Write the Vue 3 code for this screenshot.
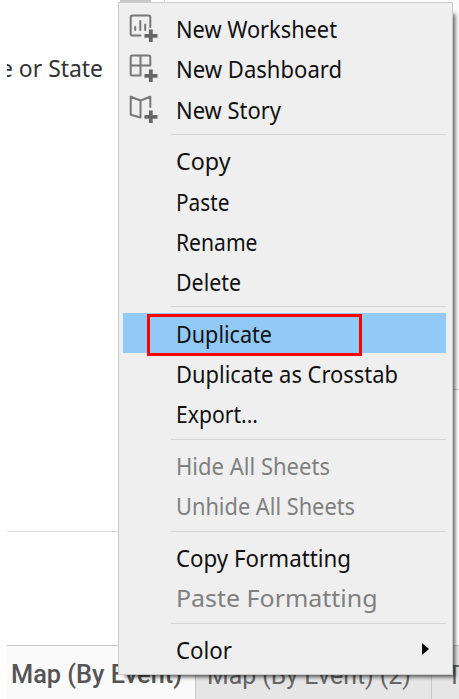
<script setup>
const groups = [
  [
    { label: 'New Worksheet', w: 161, icon: 'sheet' },
    { label: 'New Dashboard', w: 166, icon: 'dash' },
    { label: 'New Story', w: 105, icon: 'story' },
  ],
  [
    { label: 'Copy', w: 54.5 },
    { label: 'Paste', w: 53.5 },
    { label: 'Rename', w: 81.5 },
    { label: 'Delete', w: 65 },
  ],
  [
    { label: 'Duplicate', w: 96, active: true },
    { label: 'Duplicate as Crosstab', w: 222 },
    { label: 'Export...', w: 82 },
  ],
  [
    { label: 'Hide All Sheets', w: 154, disabled: true },
    { label: 'Unhide All Sheets', w: 179, disabled: true },
  ],
  [
    { label: 'Copy Formatting', w: 175 },
    { label: 'Paste Formatting', w: 201.5, disabled: true },
  ],
  [{ label: 'Color', w: 56, submenu: true }],
]
</script>

<template>
  <div class="screen">
    <main class="canvas">
      <div class="top">
        <svg class="field" width="110" height="34">
          <text x="-7" y="26" textLength="103" lengthAdjust="spacingAndGlyphs">e or State</text>
        </svg>
      </div>
      <div class="shelf"></div>
    </main>
    <aside class="side"><div class="upper"></div></aside>
    <footer class="tabs">
      <div class="tab current">
        <svg width="188" height="53"><text x="4" y="37" textLength="171" lengthAdjust="spacingAndGlyphs">Map (By Event)</text></svg>
      </div>
      <div class="tab second">
        <svg width="234" height="53"><text x="11" y="38" textLength="204" lengthAdjust="spacingAndGlyphs">Map (By Event) (2)</text></svg>
      </div>
      <div class="tab third">
        <svg width="28" height="53"><text x="15" y="38">Tr</text></svg>
      </div>
    </footer>

    <div class="anchor"></div>
    <div class="shade"></div>
    <nav class="menu">
      <div v-for="(group, g) in groups" :key="g" class="group">
        <div v-for="item in group" :key="item.label" class="item" :class="{ active: item.active, disabled: item.disabled }">
          <span class="icon">
            <svg v-if="item.icon" width="30" height="34" viewBox="0 0 30 34">
              <g class="line">
                <template v-if="item.icon === 'sheet'">
                  <path d="M11.5 27.5H3.5Q1.7 27.5 1.7 25.7V9.3Q1.7 7.5 3.5 7.5H19.5Q21.3 7.5 21.3 9.3V19" />
                  <path d="M6.2 19V22M11.3 13V22M16.2 16.5V22" />
                </template>
                <template v-else-if="item.icon === 'dash'">
                  <path d="M11.5 27.5H3.2Q1.7 27.5 1.7 26V9Q1.7 7.5 3.2 7.5H19.8Q21.3 7.5 21.3 9V17.5H1.7M11.5 7.5V27.5" />
                </template>
                <template v-else>
                  <path d="M11.5 28.5L1.7 25.7V7.7L11.5 11.5L21.3 7.7V18M11.5 11.5V28.5" />
                </template>
              </g>
              <path class="plus" d="M21.8 21.5V34M15.5 27.9H28.5" />
            </svg>
          </span>
          <svg class="label" width="240" height="40"><text x="0" y="30" :textLength="item.w" lengthAdjust="spacingAndGlyphs">{{ item.label }}</text></svg>
          <svg v-if="item.submenu" class="arrow" width="8" height="12"><path d="M0 0L7 6L0 12Z" /></svg>
        </div>
      </div>
    </nav>
    <div class="callout"></div>
  </div>
</template>

<style>
body { margin: 0; background: #fff; overflow: hidden; }
</style>
<style scoped>
.screen {
  position: relative; width: 459px; height: 699px; overflow: hidden;
  display: grid; grid-template-columns: 164px 1fr; grid-template-rows: 645px 54px;
  font-family: "Noto Sans", "Open Sans", sans-serif; background: #fff;
}
svg { display: block; }
.canvas { display: flex; flex-direction: column; padding-left: 7px; }
.top { box-sizing: border-box; height: 531px; padding-top: 51px; }
.field { font-size: 23px; fill: #333; overflow: hidden; }
.shelf { flex: 1; border-top: 1px solid #d9d9d9; }
.side { border-left: 1px solid #d9d9d9; }
.upper { height: 389px; background: #fafafa; border-bottom: 1px solid #d0d0d0; }
.tabs { grid-column: 1 / 3; display: flex; margin-left: 7px; font-family: Roboto, sans-serif; font-size: 25px; }
.tab { box-sizing: border-box; height: 54px; border-top: 1px solid #c6c6c6; background: #e6e6e6; fill: #666; overflow: hidden; }
.current { width: 188px; background: #fafafa; fill: #555; font-weight: 500; }
.second { width: 236px; border-left: 1px solid #c6c6c6; }
.third { width: 28px; border-left: 1px solid #c6c6c6; }
.anchor { position: absolute; left: 120px; top: 0; width: 31px; height: 3px; background: #c8c8c8; }
.shade {
  position: absolute; left: 125px; top: 14px; width: 328px; height: 661px;
  box-shadow: 1px 1px 4px 1px rgba(0, 0, 0, .65);
}
.menu {
  position: absolute; left: 118px; top: 2px; width: 335px; height: 673px; box-sizing: border-box;
  padding: 5px 6px 0 4px; border: 1px solid #ccc; background: #efefef;
}
.group + .group { padding-top: 11.4px; background: linear-gradient(#d5d5d5, #d5d5d5) 48px 5px / 276px 1px no-repeat; }
.item { display: flex; height: 40.31px; align-items: flex-start; font-size: 23.3px; fill: #111; }
.active { background: #91c9f7; }
.disabled { fill: #808080; }
.icon { width: 53px; flex: none; }
.icon svg { margin-left: 6px; }
.line { fill: none; stroke: #777; stroke-width: 2; stroke-linecap: round; stroke-linejoin: round; }
.plus { fill: none; stroke: #666; stroke-width: 3.8; }
.label { flex: none; }
.arrow { margin: 14px 0 0 6px; fill: #000; }
.callout { position: absolute; left: 147px; top: 314px; width: 215px; height: 42px; box-sizing: border-box; border: 3px solid #f00; }
</style>
